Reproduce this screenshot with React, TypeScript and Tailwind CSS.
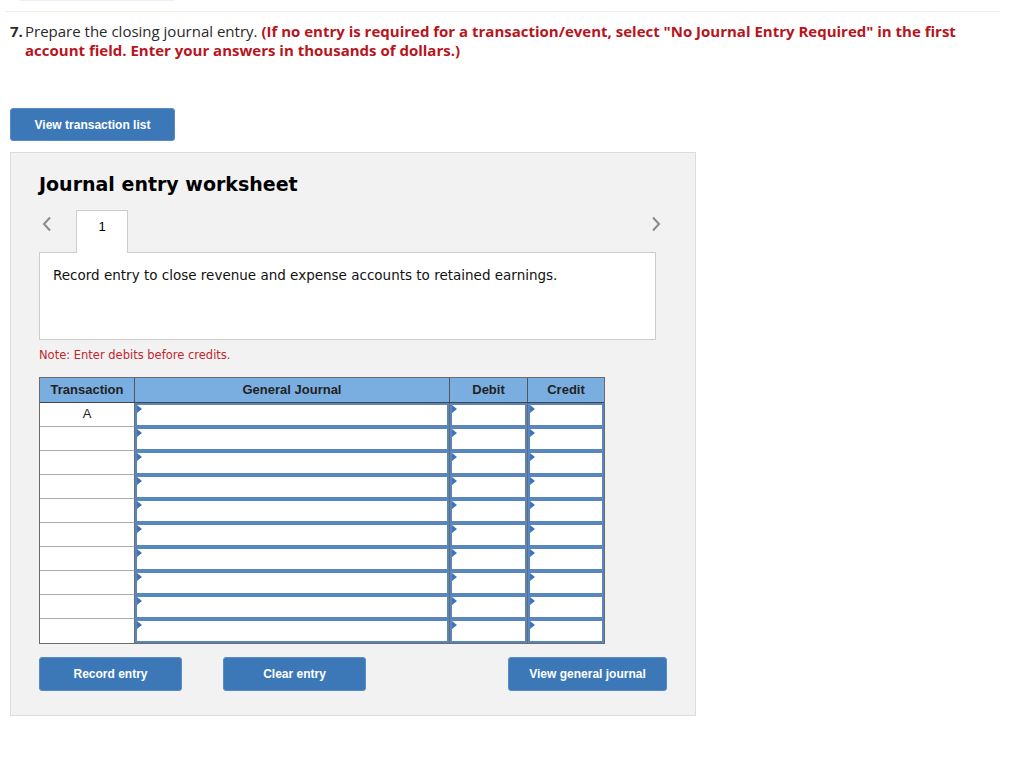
import React from "react";

function Chevron({ dir }: { dir: "left" | "right" }) {
  return (
    <svg width="10" height="16" viewBox="0 0 10 16" className="block">
      {dir === "left" ? (
        <polyline points="8,1.5 2,8 8,14.5" fill="none" stroke="#8a8a8a" strokeWidth="2" />
      ) : (
        <polyline points="2,1.5 8,8 2,14.5" fill="none" stroke="#8a8a8a" strokeWidth="2" />
      )}
    </svg>
  );
}

function InputCell({ w, divider }: { w: string; divider?: boolean }) {
  return (
    <div className={`${w} h-[24px] ${divider ? "border-r border-[#6b6b6b]" : ""} bg-white`}>
      <div className="relative h-full w-full border-2 border-[#5a86be] bg-white">
        <div className="absolute left-0 top-0 h-0 w-0 border-y-[4px] border-l-[5px] border-y-transparent border-l-[#3c76b8]" />
      </div>
    </div>
  );
}

export default function App() {
  const rows = Array.from({ length: 10 });
  const btn =
    "rounded-[3px] border border-[#5b8bc4] bg-[#3c78b8] text-[12px] font-bold text-white font-['Liberation_Sans',Arial,sans-serif]";
  return (
    <div className="min-h-[770px] w-[1024px] bg-white">
      <div className="ml-[20px] h-[1px] w-[155px] bg-[#e8eff9]" />
      <div className="ml-[6px] mt-[10px] h-[1px] w-[994px] bg-[#ececec]" />
      <div className="ml-[10px] mt-[10px] flex w-[960px] text-[15px] leading-[19px] text-[#2a2a2a] font-['Open_Sans',sans-serif]">
        <div className="w-[15px] shrink-0 font-bold">7.</div>
        <p className="flex-1">
          Prepare the closing journal entry.{" "}
          <span className="font-bold text-[#b8141d]">
            (If no entry is required for a transaction/event, select "No Journal Entry Required" in the first account field. Enter your answers in thousands of dollars.)
          </span>
        </p>
      </div>

      <div className="ml-[10px] mt-[48px]">
        <button className={`${btn} h-[33px] w-[165px]`}>View transaction list</button>
      </div>

      <div className="ml-[10px] mt-[11px] w-[686px] h-[564px] border border-[#dcdcdc] bg-[#f2f2f2] pl-[28px] pt-[19px] font-['DejaVu_Sans',Verdana,sans-serif]">
        <h2 className="text-[19px] font-bold leading-[24px] text-black">Journal entry worksheet</h2>

        <div className="mt-[14px] w-[617px]">
          <div className="relative z-10 flex h-[42px] items-start">
            <div className="flex w-[37px] pt-[6px] pl-[3px]">
              <Chevron dir="left" />
            </div>
            <div className="-mb-px flex h-[43px] w-[52px] justify-center border border-b-0 border-[#cccccc] bg-white pt-[6px] text-[13px] font-['Liberation_Sans',Arial,sans-serif] text-black">
              1
            </div>
            <div className="flex-1" />
            <div className="-mr-[5px] pt-[6px]">
              <Chevron dir="right" />
            </div>
          </div>
          <div className="h-[88px] border border-[#cccccc] bg-white px-[13px] pt-[13px] text-[13.5px] leading-[18px] text-[#111]">
            Record entry to close revenue and expense accounts to retained earnings.
          </div>
        </div>

        <div className="mt-[8px] text-[11.5px] leading-[14px] text-[#c0272d]">Note: Enter debits before credits.</div>

        <div className="mt-[15px] w-[566px] border border-[#6b6b6b] font-['Liberation_Sans',Arial,sans-serif] text-[13px]">
          <div className="flex h-[25px] border-b border-[#444] bg-[#7aaee1] font-bold text-[#222] leading-[23px]">
            <div className="w-[95px] border-r border-[#555] text-center">Transaction</div>
            <div className="w-[315px] border-r border-[#555] text-center">General Journal</div>
            <div className="w-[78px] border-r border-[#555] text-center">Debit</div>
            <div className="w-[76px] text-center">Credit</div>
          </div>
          {rows.map((_, i) => (
            <div key={i} className="flex h-[24px]">
              <div
                className={`w-[95px] border-r border-[#6b6b6b] bg-white text-center leading-[22px] text-[#222] ${
                  i < 9 ? "border-b border-b-[#aaaaaa]" : ""
                }`}
              >
                {i === 0 ? "A" : ""}
              </div>
              <InputCell w="w-[315px]" divider />
              <InputCell w="w-[78px]" divider />
              <InputCell w="w-[76px]" />
            </div>
          ))}
        </div>

        <div className="mt-[13px] flex w-[628px]">
          <button className={`${btn} h-[34px] w-[143px]`}>Record entry</button>
          <button className={`${btn} ml-[41px] h-[34px] w-[143px]`}>Clear entry</button>
          <div className="flex-1" />
          <button className={`${btn} h-[34px] w-[159px]`}>View general journal</button>
        </div>
      </div>
    </div>
  );
}
